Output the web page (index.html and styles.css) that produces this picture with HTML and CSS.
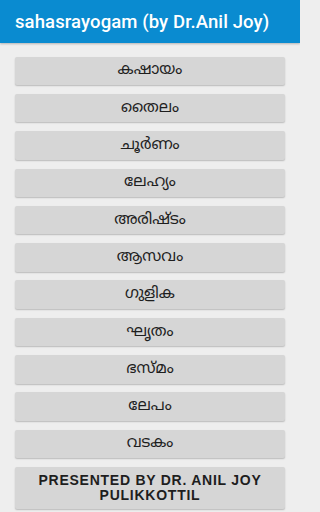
FILE: index.html
```html
<!DOCTYPE html>
<html lang="ml">
<head>
<meta charset="utf-8">
<title>sahasrayogam</title>
<link rel="stylesheet" href="styles.css">
</head>
<body>
<header class="appbar">
  <h1 class="appbar-title">sahasrayogam (by Dr.Anil Joy)</h1>
</header>
<main class="menu">
  <button class="menu-btn">കഷായം</button>
  <button class="menu-btn">തൈലം</button>
  <button class="menu-btn">ചൂർണം</button>
  <button class="menu-btn">ലേഹ്യം</button>
  <button class="menu-btn">അരിഷ്ടം</button>
  <button class="menu-btn">ആസവം</button>
  <button class="menu-btn">ഗുളിക</button>
  <button class="menu-btn">ഘൃതം</button>
  <button class="menu-btn">ഭസ്മം</button>
  <button class="menu-btn">ലേപം</button>
  <button class="menu-btn">വടകം</button>
  <button class="menu-btn menu-btn-credit">PRESENTED BY DR. ANIL JOY PULIKKOTTIL</button>
</main>
</body>
</html>
```

FILE: styles.css
```css
html, body {
  margin: 0;
  padding: 0;
}
html {
  background: #eeeeee;
}
body {
  width: 300px;
  height: 512px;
  overflow: hidden;
  background: #eeeeee;
  font-family: Roboto, "Noto Sans", "Liberation Sans", sans-serif;
}
.appbar {
  height: 43px;
  background: #0a8bd0;
  display: flex;
  align-items: center;
  padding-left: 15px;
  box-shadow: 0 1px 2px rgba(0,0,0,0.25);
  position: relative;
}
.appbar-title {
  margin: 0;
  color: #ffffff;
  font-size: 18.5px;
  font-weight: 500;
  letter-spacing: 0.1px;
}
.menu {
  display: flex;
  flex-direction: column;
  gap: 8.8px;
  padding: 13.7px 15px 0 15px;
}
.menu-btn {
  height: 28.5px;
  border: none;
  border-radius: 2px;
  background: #d6d6d6;
  box-shadow: 0 1px 1.5px rgba(0,0,0,0.22);
  color: #1e1e1e;
  font-family: "Noto Sans Malayalam", "Lohit Malayalam", Meera, Roboto, "Noto Sans", sans-serif;
  font-size: 15.5px;
  padding: 0;
  text-align: center;
}
.menu-btn-credit {
  height: 42px;
  font-family: "Liberation Sans", Arial, sans-serif;
  font-weight: 700;
  font-size: 14px;
  line-height: 14.5px;
  padding: 0 16px;
  letter-spacing: 0.75px;
}
```
